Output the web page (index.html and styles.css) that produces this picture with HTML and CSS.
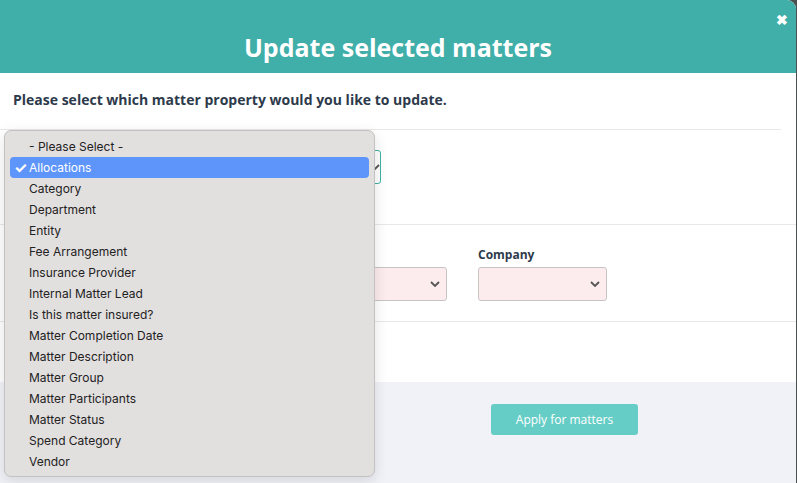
FILE: index.html
```html
<!DOCTYPE html>
<html lang="en">
<head>
  <meta charset="UTF-8">
  <title>Update selected matters</title>
  <link rel="stylesheet" href="styles.css">
</head>
<body>

  <div class="modal">
    <div class="modal-header">
      <h1>Update selected matters</h1>
      <button class="close-btn">&#10006;</button>
    </div>

    <div class="intro">
      <p>Please select which matter property would you like to update.</p>
    </div>

    <div class="section property-row">
      <div class="select-wrap">
        <select class="property-select">
          <option></option>
        </select>
        <svg class="chevron" width="10" height="6" viewBox="0 0 10 6"><path d="M1 1l4 4 4-4" fill="none" stroke="#555" stroke-width="1.8"/></svg>
      </div>
    </div>

    <div class="section fields-row">
      <div class="field field-wide">
        <label></label>
        <div class="select-wrap">
          <select class="field-select"></select>
          <svg class="chevron" width="10" height="6" viewBox="0 0 10 6"><path d="M1 1l4 4 4-4" fill="none" stroke="#555" stroke-width="1.8"/></svg>
        </div>
      </div>
      <div class="field">
        <label>Company</label>
        <div class="select-wrap">
          <select class="field-select"></select>
          <svg class="chevron" width="10" height="6" viewBox="0 0 10 6"><path d="M1 1l4 4 4-4" fill="none" stroke="#555" stroke-width="1.8"/></svg>
        </div>
      </div>
    </div>

    <div class="spacer"></div>

    <div class="modal-footer">
      <button class="apply-btn" disabled>Apply for matters</button>
    </div>
  </div>

  <ul class="dropdown">
    <li>- Please Select -</li>
    <li class="selected">Allocations</li>
    <li>Category</li>
    <li>Department</li>
    <li>Entity</li>
    <li>Fee Arrangement</li>
    <li>Insurance Provider</li>
    <li>Internal Matter Lead</li>
    <li>Is this matter insured?</li>
    <li>Matter Completion Date</li>
    <li>Matter Description</li>
    <li>Matter Group</li>
    <li>Matter Participants</li>
    <li>Matter Status</li>
    <li>Spend Category</li>
    <li>Vendor</li>
  </ul>

</body>
</html>
```

FILE: styles.css
```css
* { box-sizing: border-box; }

body {
  margin: 0;
  height: 483px;
  overflow: hidden;
  background: #4b5050;
  font-family: 'Open Sans', sans-serif;
  color: #2d3a4b;
}

.modal {
  width: 796px;
  height: 483px;
  background: #fff;
  border-top-right-radius: 9px;
  overflow: hidden;
  display: flex;
  flex-direction: column;
}

.modal-header {
  position: relative;
  height: 73px;
  flex-shrink: 0;
  background: #40aea9;
  display: flex;
  align-items: center;
  justify-content: center;
  padding-top: 20px;
}

.modal-header h1 {
  margin: 0;
  color: #fff;
  font-size: 25px;
  font-weight: 700;
}

.close-btn {
  position: absolute;
  top: 12px;
  right: 8px;
  background: none;
  border: none;
  color: #fff;
  font-size: 14px;
  font-weight: 700;
  padding: 0;
  cursor: pointer;
}

.intro {
  height: 57px;
  margin-right: 15px;
  padding: 17px 13px 0;
  border-bottom: 1px solid #e8e8e8;
}

.intro p {
  margin: 0;
  font-size: 14px;
  font-weight: 700;
}

.section {
  border-bottom: 1px solid #e8e8e8;
  padding: 0 13px;
}

.select-wrap { position: relative; }

.select-wrap select {
  appearance: none;
  -webkit-appearance: none;
  width: 100%;
  display: block;
}

.chevron {
  position: absolute;
  right: 7px;
  top: 14px;
  pointer-events: none;
}

.property-row {
  height: 95px;
  padding-top: 20px;
}

.property-row .select-wrap { width: 368px; }

.property-row .chevron { right: 1px; }

.property-select {
  height: 34px;
  border: 1px solid #3fb3a3;
  border-radius: 3px;
  background: #fff;
}

.fields-row {
  height: 97px;
  display: flex;
  gap: 31px;
  padding-top: 21px;
}

.field {
  display: flex;
  flex-direction: column;
  width: 129px;
}

.field-wide { width: 434px; }

.field label {
  height: 16px;
  font-size: 12px;
  font-weight: 700;
  margin-bottom: 5px;
}

.field-select {
  height: 34px;
  border: 1px solid #c8c4c4;
  border-radius: 3px;
  background: #fdeced;
}

.spacer { height: 60px; }

.modal-footer {
  flex: 1;
  background: #f0f2f7;
  padding: 22px 0 0 491px;
}

.apply-btn {
  width: 147px;
  height: 31px;
  border: none;
  border-radius: 3px;
  background: #66cdc6;
  color: #fff;
  font-family: 'Open Sans', sans-serif;
  font-size: 12px;
}

.dropdown {
  position: absolute;
  left: 4px;
  top: 130px;
  width: 371px;
  height: 347px;
  margin: 0;
  padding: 5px 0 0;
  list-style: none;
  background: #e2dfdf;
  border: 1px solid #c3c1c1;
  border-radius: 7px;
  box-shadow: 0 4px 14px rgba(0, 0, 0, 0.12);
  font-family: Inter, sans-serif;
  font-size: 12px;
  color: #222;
}

.dropdown li {
  height: 21px;
  line-height: 21px;
  padding-left: 19px;
  margin: 0 5px;
  border-radius: 4px;
}

.dropdown li.selected {
  position: relative;
  background: #5e95fa;
  color: #fff;
}

.dropdown li.selected::before {
  content: "\2713";
  position: absolute;
  left: 4px;
  font-size: 15px;
  font-weight: 700;
}
```
